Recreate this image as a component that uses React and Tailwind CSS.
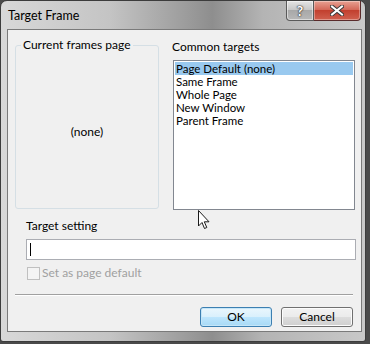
import React from "react";

const font = { fontFamily: "Lato, 'Liberation Sans', sans-serif" };

function TitleButtons() {
  return (
    <div className="flex self-start">
      <div className="w-[28px] h-[20px] rounded-bl-[4px] border border-t-0 border-[#5a5a5a] bg-[linear-gradient(#e4e4e4,#c8c8c8_45%,#a8a8a8_50%,#b8b8b8)] flex items-center justify-center shadow-[inset_0_0_0_1px_rgba(255,255,255,0.5)]">
        <span className="text-white font-bold text-[14px] leading-none [text-shadow:0_0_1px_#333,0_0_1px_#333,0_0_2px_#333]">?</span>
      </div>
      <div className="w-[47px] h-[20px] rounded-br-[4px] border border-l-0 border-t-0 border-[#5a2a2a] bg-[linear-gradient(#e8a193,#d46a5a_45%,#c2402f_50%,#d0604f)] flex items-center justify-center shadow-[inset_0_0_0_1px_rgba(255,255,255,0.35)]">
        <svg width="14" height="11" viewBox="0 0 14 11">
          <path d="M2 1.5 L12 9.5 M12 1.5 L2 9.5" stroke="#3a3a3a" strokeWidth="4" strokeLinecap="square" />
          <path d="M2 1.5 L12 9.5 M12 1.5 L2 9.5" stroke="#ffffff" strokeWidth="2" strokeLinecap="square" />
        </svg>
      </div>
    </div>
  );
}

function Cursor() {
  return (
    <svg className="absolute left-[198px] top-[210px]" width="13" height="20" viewBox="0 0 13 20">
      <path d="M0.5 0.5 L0.5 16 L4 12.5 L6.5 18.5 L8.8 17.5 L6.3 11.8 L11 11.8 Z" fill="#ffffff" stroke="#1a1a1a" strokeWidth="1" strokeLinejoin="miter" />
    </svg>
  );
}

export default function App() {
  const targets = ["Page Default (none)", "Same Frame", "Whole Page", "New Window", "Parent Frame"];

  return (
    <div className="w-[370px] h-[344px] bg-[#4a4a4a] relative overflow-hidden" style={font}>
      {/* window frame */}
      <div className="w-[366px] h-[342px] rounded-t-[7px] rounded-b-[3px] border border-[#3c3c3c] bg-[linear-gradient(to_right,#d8d8d8,#c4c4c4_30%,#9a9a9a_52%,#8e8e8e_58%,#b4b4b4_72%,#c8c8c8_100%)] flex flex-col">
        {/* title bar */}
        <div className="h-[28px] flex justify-between pl-[7px] pr-[4px] shrink-0">
          <span className="text-[12.5px] text-black mt-[7px] leading-[16px]">Target Frame</span>
          <TitleButtons />
        </div>

        {/* client area */}
        <div className="ml-[6px] mr-[3px] h-[303px] border border-[#7a7a7a] bg-[#f0f0f0] flex flex-col text-[12px] text-black">
          <div className="flex pt-[10px] pl-[7px] gap-[14px]">
            {/* group box */}
            <div className="relative w-[144px] h-[164px] mt-[5px] border border-[#d5dfe5] rounded-[3px] flex items-center justify-center">
              <span className="absolute -top-[9px] left-[5px] px-[2px] bg-[#f0f0f0] leading-[16px]">Current frames page</span>
              <span className="mt-[10px]">(none)</span>
            </div>

            {/* list */}
            <div className="flex flex-col">
              <span className="leading-[16px] -ml-[1px] mt-[-1px]">Common targets</span>
              <div className="mt-[5px] w-[182px] h-[150px] border border-[#828790] bg-white p-[1px]">
                {targets.map((t, i) => (
                  <div
                    key={t}
                    className={`h-[13px] leading-[13px] pl-[1px] text-[11.5px] ${i === 0 ? "bg-[#99c9ef]" : ""}`}
                  >
                    {t}
                  </div>
                ))}
              </div>
            </div>
          </div>

          <span className="ml-[18px] mt-[8px] leading-[16px]">Target setting</span>
          <div className="ml-[18px] mt-[5px] w-[330px] h-[21px] border border-[#abadb3] bg-white flex items-center pl-[3px]">
            <div className="w-[1px] h-[13px] bg-black" />
          </div>

          <div className="ml-[19px] mt-[6px] flex items-center gap-[2px]">
            <div className="w-[13px] h-[13px] border border-[#c0c0c0] bg-[#f4f4f4]" />
            <span className="text-[#a0a0a0] leading-[14px]">Set as page default</span>
          </div>

          <div className="ml-[7px] mt-[14px] w-[338px] h-[1px] bg-[#a0a0a0] border-b border-white box-content" />

          <div className="flex justify-end gap-[9px] mr-[8px] mt-[11px]">
            <button className="w-[72px] h-[20px] rounded-[3px] border border-[#3c7fb1] bg-[linear-gradient(#eaf6fd,#d9f0fc_50%,#bee6fd_50%,#a7d9f5)] text-[12px] leading-none shadow-[inset_0_0_0_1px_#c5e6f8]">
              OK
            </button>
            <button className="w-[72px] h-[20px] rounded-[3px] border border-[#707070] bg-[linear-gradient(#f2f2f2,#ebebeb_50%,#dddddd_50%,#cfcfcf)] text-[12px] leading-none shadow-[inset_0_0_0_1px_#fcfcfc]">
              Cancel
            </button>
          </div>
        </div>
      </div>
      <Cursor />
    </div>
  );
}
